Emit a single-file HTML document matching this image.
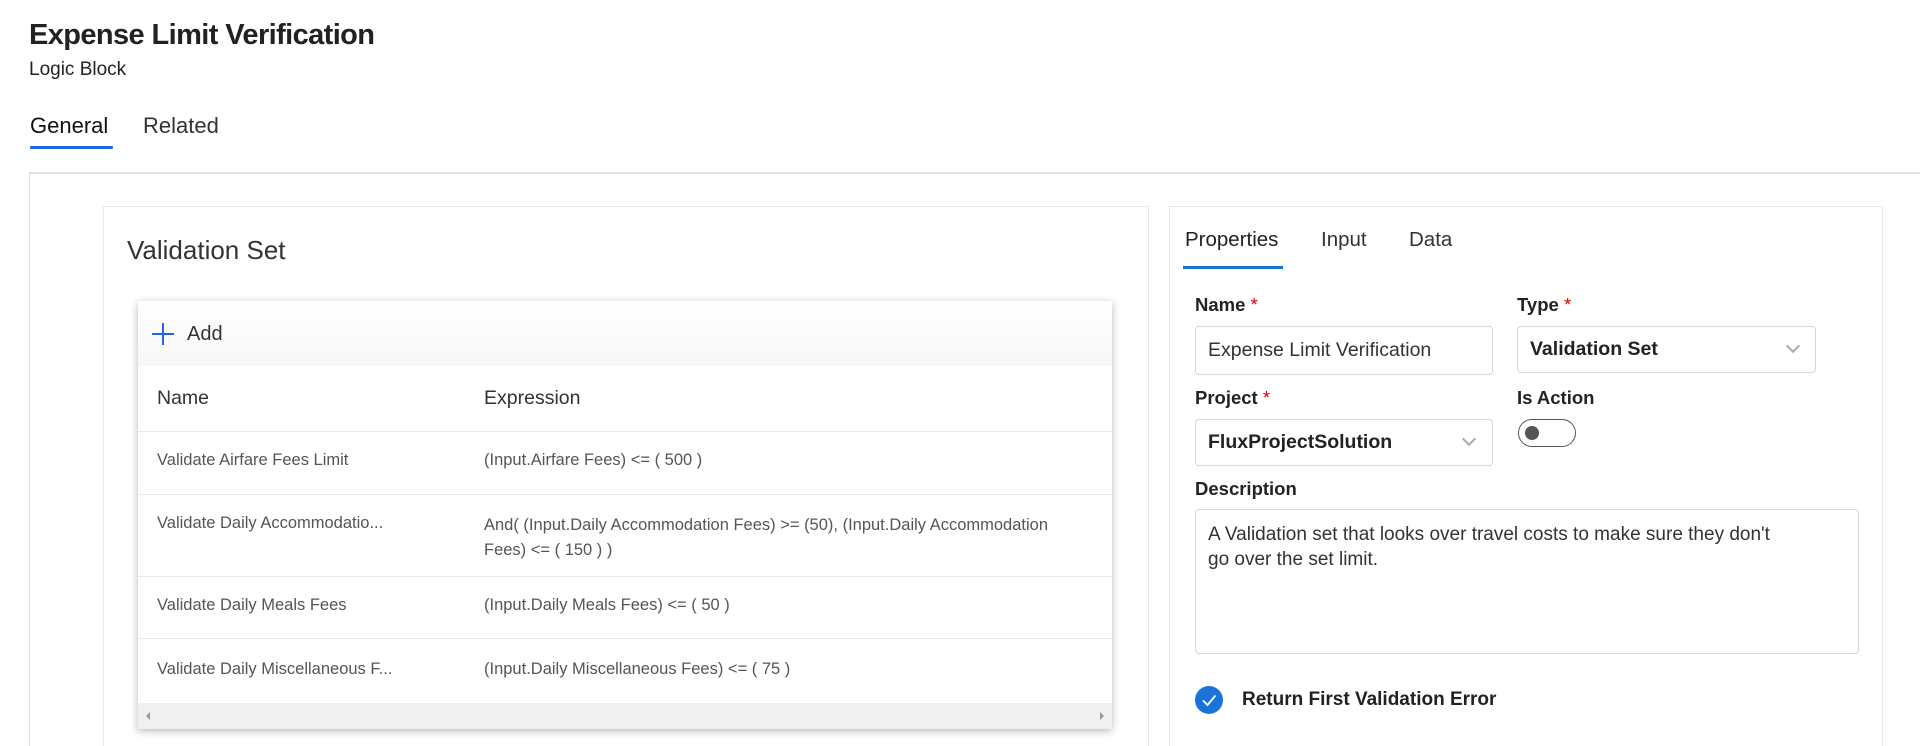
<!DOCTYPE html>
<html><head><meta charset="utf-8"><style>
*{box-sizing:border-box;margin:0;padding:0}
html{width:1920px;height:746px;overflow:hidden}
body{width:1920px;height:746px;overflow:hidden;background:#fff;font-family:"Liberation Sans",sans-serif;color:#222;position:relative}
.a{position:absolute;white-space:nowrap}
.lbl{font-size:18.5px;font-weight:bold;color:#222}
.req{color:#d00;font-weight:normal}
.box{position:absolute;border:1px solid #d6d6d6;border-radius:4px;background:#fff}
.chev{position:absolute;width:10px;height:10px;border-right:2px solid #aaa;border-bottom:2px solid #aaa;transform:rotate(45deg)}
.cell{font-size:16.5px;color:#555}
.line{position:absolute;left:0;right:0;height:1px;background:#eaeaea}
</style></head><body>
<div class="a" style="left:29px;top:19px;font-size:29px;font-weight:bold;letter-spacing:-0.6px">Expense Limit Verification</div>
<div class="a" style="left:29px;top:59px;font-size:19px">Logic Block</div>
<div class="a" style="left:30px;top:113px;font-size:22px;color:#111">General</div>
<div class="a" style="left:143px;top:113px;font-size:22px;color:#333">Related</div>
<div class="a" style="left:30px;top:146px;width:83px;height:3px;background:#2266e3;border-radius:1px"></div>
<div class="a" style="left:29px;top:172px;width:1891px;height:574px;border-top:2px solid #e0e0e0;border-left:1px solid #e0e0e0"></div>

<div class="a" style="left:103px;top:206px;width:1046px;height:540px;border:1px solid #e8e8e8;border-bottom:none"></div>
<div class="a" style="left:127px;top:235px;font-size:26px;color:#333">Validation Set</div>

<div class="a" style="left:138px;top:301px;width:974px;height:428px;background:#fff;box-shadow:0 2px 8px rgba(0,0,0,.28);overflow:hidden">
  <div style="position:absolute;left:0;top:0;right:0;height:65px;background:linear-gradient(#fff,#f7f7f7)"></div>
  <div class="a" style="left:14px;top:22px;width:22px;height:22px">
    <div style="position:absolute;left:10px;top:0;width:2px;height:22px;background:#2266e3"></div>
    <div style="position:absolute;left:0;top:10px;width:22px;height:2px;background:#2266e3"></div>
  </div>
  <div class="a" style="left:49px;top:22px;font-size:20px;color:#333">Add</div>
  <div class="a" style="left:19px;top:86px;font-size:19.5px;color:#333">Name</div>
  <div class="a" style="left:346px;top:86px;font-size:19.5px;color:#333">Expression</div>
  <div class="line" style="top:130px"></div>
  <div class="a cell" style="left:19px;top:150px">Validate Airfare Fees Limit</div>
  <div class="a cell" style="left:346px;top:150px">(Input.Airfare Fees) &lt;= ( 500 )</div>
  <div class="line" style="top:193px"></div>
  <div class="a cell" style="left:19px;top:213px">Validate Daily Accommodatio...</div>
  <div class="a cell" style="left:346px;top:212px;line-height:25px">And( (Input.Daily Accommodation Fees) &gt;= (50), (Input.Daily Accommodation<br>Fees) &lt;= ( 150 ) )</div>
  <div class="line" style="top:275px"></div>
  <div class="a cell" style="left:19px;top:295px">Validate Daily Meals Fees</div>
  <div class="a cell" style="left:346px;top:295px">(Input.Daily Meals Fees) &lt;= ( 50 )</div>
  <div class="line" style="top:337px"></div>
  <div class="a cell" style="left:19px;top:359px">Validate Daily Miscellaneous F...</div>
  <div class="a cell" style="left:346px;top:359px">(Input.Daily Miscellaneous Fees) &lt;= ( 75 )</div>
  <div style="position:absolute;left:0;right:0;top:402px;height:26px;background:#f0f0f0"></div>
  <div class="a" style="left:8px;top:411px;width:0;height:0;border-top:4px solid transparent;border-bottom:4px solid transparent;border-right:4px solid #999"></div>
  <div class="a" style="left:962px;top:411px;width:0;height:0;border-top:4px solid transparent;border-bottom:4px solid transparent;border-left:4px solid #999"></div>
</div>

<div class="a" style="left:1169px;top:206px;width:714px;height:540px;border:1px solid #e8e8e8;border-bottom:none"></div>
<div class="a" style="left:1185px;top:228px;font-size:20.5px;color:#222">Properties</div>
<div class="a" style="left:1321px;top:228px;font-size:20.5px;color:#333">Input</div>
<div class="a" style="left:1409px;top:228px;font-size:20.5px;color:#333">Data</div>
<div class="a" style="left:1183px;top:266px;width:100px;height:3px;background:#1a73d6"></div>

<div class="a lbl" style="left:1195px;top:294px">Name <span class="req">*</span></div>
<div class="a lbl" style="left:1517px;top:294px">Type <span class="req">*</span></div>
<div class="box" style="left:1195px;top:326px;width:298px;height:49px"></div>
<div class="a" style="left:1208px;top:339px;font-size:19.5px;color:#333">Expense Limit Verification</div>
<div class="box" style="left:1517px;top:326px;width:299px;height:47px"></div>
<div class="a" style="left:1530px;top:338px;font-size:19.5px;font-weight:bold;color:#222">Validation Set</div>
<div class="chev" style="left:1788px;top:341px"></div>

<div class="a lbl" style="left:1195px;top:387px">Project <span class="req">*</span></div>
<div class="a lbl" style="left:1517px;top:387px">Is Action</div>
<div class="box" style="left:1195px;top:419px;width:298px;height:47px"></div>
<div class="a" style="left:1208px;top:431px;font-size:19.5px;font-weight:bold;color:#222">FluxProjectSolution</div>
<div class="chev" style="left:1464px;top:434px"></div>
<div class="a" style="left:1518px;top:419px;width:58px;height:28px;border:1.5px solid #555;border-radius:14px"></div>
<div class="a" style="left:1525px;top:426px;width:14px;height:14px;border-radius:7px;background:#555"></div>

<div class="a lbl" style="left:1195px;top:478px">Description</div>
<div class="box" style="left:1195px;top:509px;width:664px;height:145px"></div>
<div class="a" style="left:1208px;top:522px;font-size:19px;line-height:25px;color:#333">A Validation set that looks over travel costs to make sure they don't<br>go over the set limit.</div>

<div class="a" style="left:1195px;top:686px;width:28px;height:28px;border-radius:14px;background:#1a73d6"></div>
<svg class="a" style="left:1195px;top:686px" width="28" height="28"><path d="M8 14.5 L12.5 19 L20.5 9.5" fill="none" stroke="#fff" stroke-width="1.8"/></svg>
<div class="a" style="left:1242px;top:689px;font-size:19px;font-weight:bold;color:#222">Return First Validation Error</div>
</body></html>
